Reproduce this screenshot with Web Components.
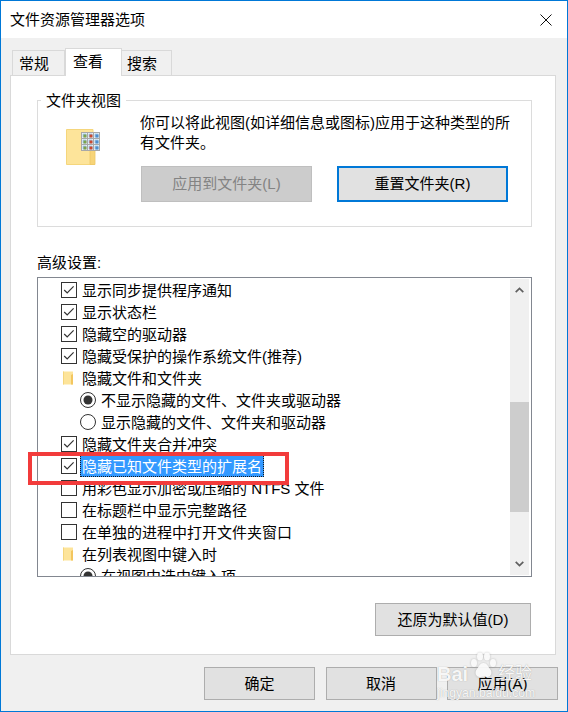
<!DOCTYPE html>
<html lang="zh-CN">
<head>
<meta charset="utf-8">
<title>文件资源管理器选项</title>
<style>
  html, body { margin: 0; padding: 0; background: #fff; }
  body { font: 15px/20px "Liberation Sans", "Noto Sans CJK SC", sans-serif; color: #000; }
</style>
</head>
<body>
<win-dialog heading="文件资源管理器选项">
  <tab-strip slot="tabs"></tab-strip>

  <group-box heading="文件夹视图">
    <folder-view></folder-view>
    <span slot="text">你可以将此视图(如详细信息或图标)应用于这种类型的所有文件夹。</span>
    <ui-button slot="actions" width="171" height="36" state="disabled">应用到文件夹(L)</ui-button>
    <ui-button slot="actions" width="171" height="36" state="focus">重置文件夹(R)</ui-button>
  </group-box>

  <settings-list heading="高级设置:">
    <opt-row type="check" checked>显示同步提供程序通知</opt-row>
    <opt-row type="check" checked>显示状态栏</opt-row>
    <opt-row type="check" checked>隐藏空的驱动器</opt-row>
    <opt-row type="check" checked>隐藏受保护的操作系统文件(推荐)</opt-row>
    <opt-row type="folder">隐藏文件和文件夹</opt-row>
    <opt-row type="radio" checked>不显示隐藏的文件、文件夹或驱动器</opt-row>
    <opt-row type="radio">显示隐藏的文件、文件夹和驱动器</opt-row>
    <opt-row type="check" checked>隐藏文件夹合并冲突</opt-row>
    <opt-row type="check" checked selected>隐藏已知文件类型的扩展名</opt-row>
    <opt-row type="check">用彩色显示加密或压缩的 NTFS 文件</opt-row>
    <opt-row type="check">在标题栏中显示完整路径</opt-row>
    <opt-row type="check">在单独的进程中打开文件夹窗口</opt-row>
    <opt-row type="folder">在列表视图中键入时</opt-row>
    <opt-row type="radio" checked>在视图中选中键入项</opt-row>
  </settings-list>

  <ui-button slot="restore" width="156" height="33">还原为默认值(D)</ui-button>

  <ui-button slot="footer" width="111" height="33">确定</ui-button>
  <ui-button slot="footer" width="111" height="33">取消</ui-button>
  <ui-button slot="footer" width="111" height="33">应用(A)</ui-button>

  <red-marker slot="overlay"></red-marker>
  <bai-mark slot="overlay"></bai-mark>
</win-dialog>

<script>
const dialogTemplate = document.createElement("template");
dialogTemplate.innerHTML = `
  <style>
    :host {
      display: block;
      position: relative;
      box-sizing: border-box;
      width: 568px;
      height: 712px;
      border: 1px solid #0078d7;
      background: #f0f0f0;
      overflow: hidden;
    }
    .title {
      display: flex;
      justify-content: space-between;
      align-items: center;
      height: 37px;
      padding: 0 15px 0 9px;
      background: #fff;
    }
    .title svg { display: block; }
    .body { padding: 10px 0 0 9px; }
    .panel {
      box-sizing: border-box;
      width: 546px;
      height: 580px;
      padding: 24px 22px 0 26px;
      background: #fff;
      border: 1px solid #d9d9d9;
    }
    .restore {
      display: flex;
      justify-content: flex-end;
      margin: 26px 2px 0 0;
    }
    .footer {
      display: flex;
      justify-content: flex-end;
      gap: 10.5px;
      margin: 12px 9px 0 0;
    }
  </style>
  <div class="title">
    <span id="heading"></span>
    <svg width="12" height="12" viewBox="0 0 12 12"><path d="M.5.5l11 11M11.5.5l-11 11" fill="none" stroke="#111" stroke-width="1"/></svg>
  </div>
  <div class="body">
    <slot name="tabs"></slot>
    <div class="panel">
      <slot></slot>
      <div class="restore"><slot name="restore"></slot></div>
    </div>
    <div class="footer"><slot name="footer"></slot></div>
  </div>
  <slot name="overlay"></slot>
`;

class WinDialog extends HTMLElement {
  constructor() {
    super();
    this.attachShadow({ mode: "open" });
    this.shadowRoot.appendChild(dialogTemplate.content.cloneNode(true));
  }

  connectedCallback() {
    this.shadowRoot.querySelector("#heading").textContent = this.getAttribute("heading");
  }
}

const tabsTemplate = document.createElement("template");
tabsTemplate.innerHTML = `
  <style>
    :host {
      display: flex;
      align-items: flex-end;
      position: relative;
      z-index: 1;
      height: 27px;
      margin: 0 0 0 2px;
    }
    .tab {
      box-sizing: border-box;
      height: 25px;
      line-height: 25px;
      background: #f0f0f0;
      border: 1px solid #d9d9d9;
      border-bottom: 0;
    }
    .tab.on {
      height: 28px;
      line-height: 26px;
      margin-bottom: -1px;
      background: #fff;
    }
  </style>
  <div class="tab" style="width:53px;padding-left:6px">常规</div>
  <div class="tab on" style="width:57px;padding-left:7px">查看</div>
  <div class="tab" style="width:51px;margin-left:-1px;padding-left:5px">搜索</div>
`;

class TabStrip extends HTMLElement {
  constructor() {
    super();
    this.attachShadow({ mode: "open" });
    this.shadowRoot.appendChild(tabsTemplate.content.cloneNode(true));
  }
}

const groupTemplate = document.createElement("template");
groupTemplate.innerHTML = `
  <style>
    :host {
      display: block;
      position: relative;
      box-sizing: border-box;
      width: 495px;
      height: 127px;
      border: 1px solid #dcdcdc;
    }
    .legend {
      position: absolute;
      left: 3px;
      top: -10px;
      padding: 0 5px;
      background: #fff;
    }
    .inner {
      display: grid;
      grid-template-columns: 103px 1fr;
      height: 100%;
    }
    .icon { padding: 28px 0 0 28px; }
    .content { padding-top: 12px; }
    .text { width: 374px; margin-left: -1px; }
    .actions { display: flex; gap: 25px; margin-top: 13px; }
  </style>
  <div class="legend"></div>
  <div class="inner">
    <div class="icon"><slot></slot></div>
    <div class="content">
      <div class="text"><slot name="text"></slot></div>
      <div class="actions"><slot name="actions"></slot></div>
    </div>
  </div>
`;

class GroupBox extends HTMLElement {
  constructor() {
    super();
    this.attachShadow({ mode: "open" });
    this.shadowRoot.appendChild(groupTemplate.content.cloneNode(true));
  }

  connectedCallback() {
    this.shadowRoot.querySelector(".legend").textContent = this.getAttribute("heading");
  }
}

class FolderView extends HTMLElement {
  constructor() {
    super();
    // 3x3 thumbnail grid sits over the top right of the folder
    const cell = [0, 1, 2, 3, 4, 5, 6, 7, 8].map((i) => {
      const x = 15.5 + (i % 3) * 6;
      const y = 3.5 + Math.floor(i / 3) * 6;
      const accent = ["#c9492f", "#7fa24a", "#4f8fce"][(i * 2 + 1) % 3];
      return `<rect x="${x + 1}" y="${y + 1}" width="4" height="4" fill="#9cc3e6"/>
        <rect x="${x + 2}" y="${y + 2}" width="3" height="3" fill="${accent}"/>`;
    }).join("");
    this.attachShadow({ mode: "open" }).innerHTML = `
      <style>
        :host { display: block; width: 36px; height: 36px; }
        svg { display: block; }
      </style>
      <svg width="36" height="36" viewBox="0 0 36 36">
        <path d="M.5.5H27V30h1.500V35.500H.5z" fill="#fde49a" stroke="#f5d67c"/>
        <path d="M24 35.500V22q0-3 2.500-3t2.500 3V35.500z" fill="#f7d478" stroke="#eec766" stroke-width=".8"/>
        <rect x="15.500" y="3.500" width="18" height="18" fill="#fff" stroke="#a8a8a8"/>
        <path d="M21.500 3.500v18M27.500 3.500v18M15.500 9.500h18M15.500 15.500h18" stroke="#a8a8a8" fill="none"/>
        ${cell}
      </svg>`;
  }
}

const buttonTemplate = document.createElement("template");
buttonTemplate.innerHTML = `
  <style>
    :host {
      display: flex;
      align-items: center;
      justify-content: center;
      box-sizing: border-box;
      background: #e1e1e1;
      border: 1px solid #adadad;
      white-space: nowrap;
    }
    :host([state="disabled"]) {
      background: #cccccc;
      border-color: #bfbfbf;
      color: #838383;
    }
    :host([state="focus"]) {
      border: 2px solid #0078d7;
    }
  </style>
  <slot></slot>
`;

class UiButton extends HTMLElement {
  constructor() {
    super();
    this.attachShadow({ mode: "open" });
    this.shadowRoot.appendChild(buttonTemplate.content.cloneNode(true));
  }

  connectedCallback() {
    this.style.width = this.getAttribute("width") + "px";
    this.style.height = this.getAttribute("height") + "px";
  }
}

const listTemplate = document.createElement("template");
listTemplate.innerHTML = `
  <style>
    :host { display: block; width: 495px; }
    .label { margin: 26px 0 4px; }
    .box {
      box-sizing: border-box;
      display: flex;
      height: 300px;
      border: 1px solid #828790;
      background: #fff;
    }
    .rows { flex: 1; min-width: 0; padding-top: 1px; overflow: hidden; }
    .bar {
      box-sizing: border-box;
      position: relative;
      flex: none;
      width: 19px;
      margin: 1px 2px 1px 0;
      background: #f0f0f0;
    }
    .thumb { height: 110px; margin-top: 123px; background: #cdcdcd; }
    .bar svg { position: absolute; left: 5px; display: block; }
    .up { top: 8px; }
    .down { bottom: 8px; }
  </style>
  <div class="label"></div>
  <div class="box">
    <div class="rows"><slot></slot></div>
    <div class="bar">
      <svg class="up" width="9" height="6" viewBox="0 0 9 6"><path d="M.7 5.200L4.500 1.400l3.800 3.800" fill="none" stroke="#606060" stroke-width="1.700"/></svg>
      <div class="thumb"></div>
      <svg class="down" width="9" height="6" viewBox="0 0 9 6"><path d="M.7.800l3.800 3.800L8.300.800" fill="none" stroke="#606060" stroke-width="1.700"/></svg>
    </div>
  </div>
`;

class SettingsList extends HTMLElement {
  constructor() {
    super();
    this.attachShadow({ mode: "open" });
    this.shadowRoot.appendChild(listTemplate.content.cloneNode(true));
  }

  connectedCallback() {
    this.shadowRoot.querySelector(".label").textContent = this.getAttribute("heading");
  }
}

const rowIcons = {
  check: `<svg width="16" height="16" viewBox="0 0 16 16"><rect x=".5" y=".5" width="15" height="15" fill="#fff" stroke="#333"/></svg>`,
  checked: `<svg width="16" height="16" viewBox="0 0 16 16"><rect x=".5" y=".5" width="15" height="15" fill="#fff" stroke="#333"/><path d="M3.200 8l3 3 6.400-6.600" fill="none" stroke="#333" stroke-width="1.200"/></svg>`,
  radio: `<svg width="16" height="16" viewBox="0 0 16 16"><circle cx="8" cy="8" r="7.500" fill="#fff" stroke="#333"/></svg>`,
  radioOn: `<svg width="16" height="16" viewBox="0 0 16 16"><circle cx="8" cy="8" r="7.500" fill="#fff" stroke="#333"/><circle cx="8" cy="8" r="4.500" fill="#333"/></svg>`,
  folder: `<svg width="16" height="16" viewBox="0 0 16 16"><path d="M2 1.500h10v13H2z" fill="#fde49a"/><path d="M2 1.500h1v13H2z" fill="#f5d67c"/><path d="M10 5l2-1v10.500h-2z" fill="#f3c65f"/></svg>`,
};

const rowTemplate = document.createElement("template");
rowTemplate.innerHTML = `
  <style>
    :host {
      display: flex;
      align-items: center;
      gap: 5px;
      height: 22px;
      padding-left: 23px;
      white-space: nowrap;
    }
    :host([type="radio"]) { padding-left: 42px; }
    .icon { display: block; flex: none; width: 16px; height: 16px; }
    .icon svg { display: block; }
    .label { box-sizing: border-box; padding-top: 2px; line-height: 20px; }
    :host([selected]) .label {
      height: 22px;
      line-height: 20px;
      margin-left: -2px;
      padding: 1px 1px 0;
      color: #fff;
      background: #3399ff;
      border: 1px dotted #1a1a1a;
    }
  </style>
  <span class="icon"></span>
  <span class="label"><slot></slot></span>
`;

class OptRow extends HTMLElement {
  constructor() {
    super();
    this.attachShadow({ mode: "open" });
    this.shadowRoot.appendChild(rowTemplate.content.cloneNode(true));
  }

  connectedCallback() {
    const type = this.getAttribute("type");
    const on = this.hasAttribute("checked");
    let icon = rowIcons.folder;
    if (type === "check") {
      icon = on ? rowIcons.checked : rowIcons.check;
    } else if (type === "radio") {
      icon = on ? rowIcons.radioOn : rowIcons.radio;
    }
    this.shadowRoot.querySelector(".icon").innerHTML = icon;
  }
}

// annotation drawn on top of the screenshot
class RedMarker extends HTMLElement {
  constructor() {
    super();
    this.attachShadow({ mode: "open" }).innerHTML = `
      <style>
        :host {
          position: absolute;
          left: 27px;
          top: 451px;
          box-sizing: border-box;
          width: 261px;
          height: 33px;
          border: 4px solid #f23b3b;
        }
      </style>`;
  }
}

class BaiMark extends HTMLElement {
  constructor() {
    super();
    this.attachShadow({ mode: "open" }).innerHTML = `
      <style>
        :host {
          position: absolute;
          left: 436px;
          top: 651px;
          width: 100px;
          color: rgba(255, 255, 255, .92);
          text-shadow: 0 0 1px rgba(110, 110, 110, .55);
          pointer-events: none;
        }
        .top { display: flex; align-items: flex-end; height: 32px; }
        .bai { font: bold 20px/20px "Liberation Sans", sans-serif; }
        svg { display: block; flex: none; align-self: flex-start; filter: drop-shadow(0 0 1px rgba(110, 110, 110, .45)); }
        .jy { font: 17px/20px "Noto Sans CJK SC", sans-serif; margin-bottom: 2px; white-space: nowrap; }
        .url { font: 12.200px/16px "Liberation Sans", sans-serif; margin-top: 1px; white-space: nowrap; }
      </style>
      <div class="top">
        <span class="bai">Bai</span>
        <svg width="30" height="28" viewBox="0 0 30 28" fill="rgba(255,255,255,.9)">
          <ellipse cx="6" cy="11" rx="3" ry="4"/>
          <ellipse cx="12" cy="4.500" rx="3" ry="4"/>
          <ellipse cx="19" cy="4.500" rx="3" ry="4"/>
          <ellipse cx="25" cy="11" rx="3" ry="4"/>
          <path d="M15.500 11c-3.500 0-4.500 3.500-6.500 6-3 3.500-1 8.500 3.500 8 2-.2 4-.2 6 0 4.500.5 6.500-4.500 3.500-8-2-2.500-3-6-6.500-6z"/>
        </svg>
        <span class="jy">经验</span>
      </div>
      <div class="url">jingyan.baidu.com</div>`;
  }
}

customElements.define("win-dialog", WinDialog);
customElements.define("tab-strip", TabStrip);
customElements.define("group-box", GroupBox);
customElements.define("folder-view", FolderView);
customElements.define("ui-button", UiButton);
customElements.define("settings-list", SettingsList);
customElements.define("opt-row", OptRow);
customElements.define("red-marker", RedMarker);
customElements.define("bai-mark", BaiMark);
</script>
</body>
</html>
